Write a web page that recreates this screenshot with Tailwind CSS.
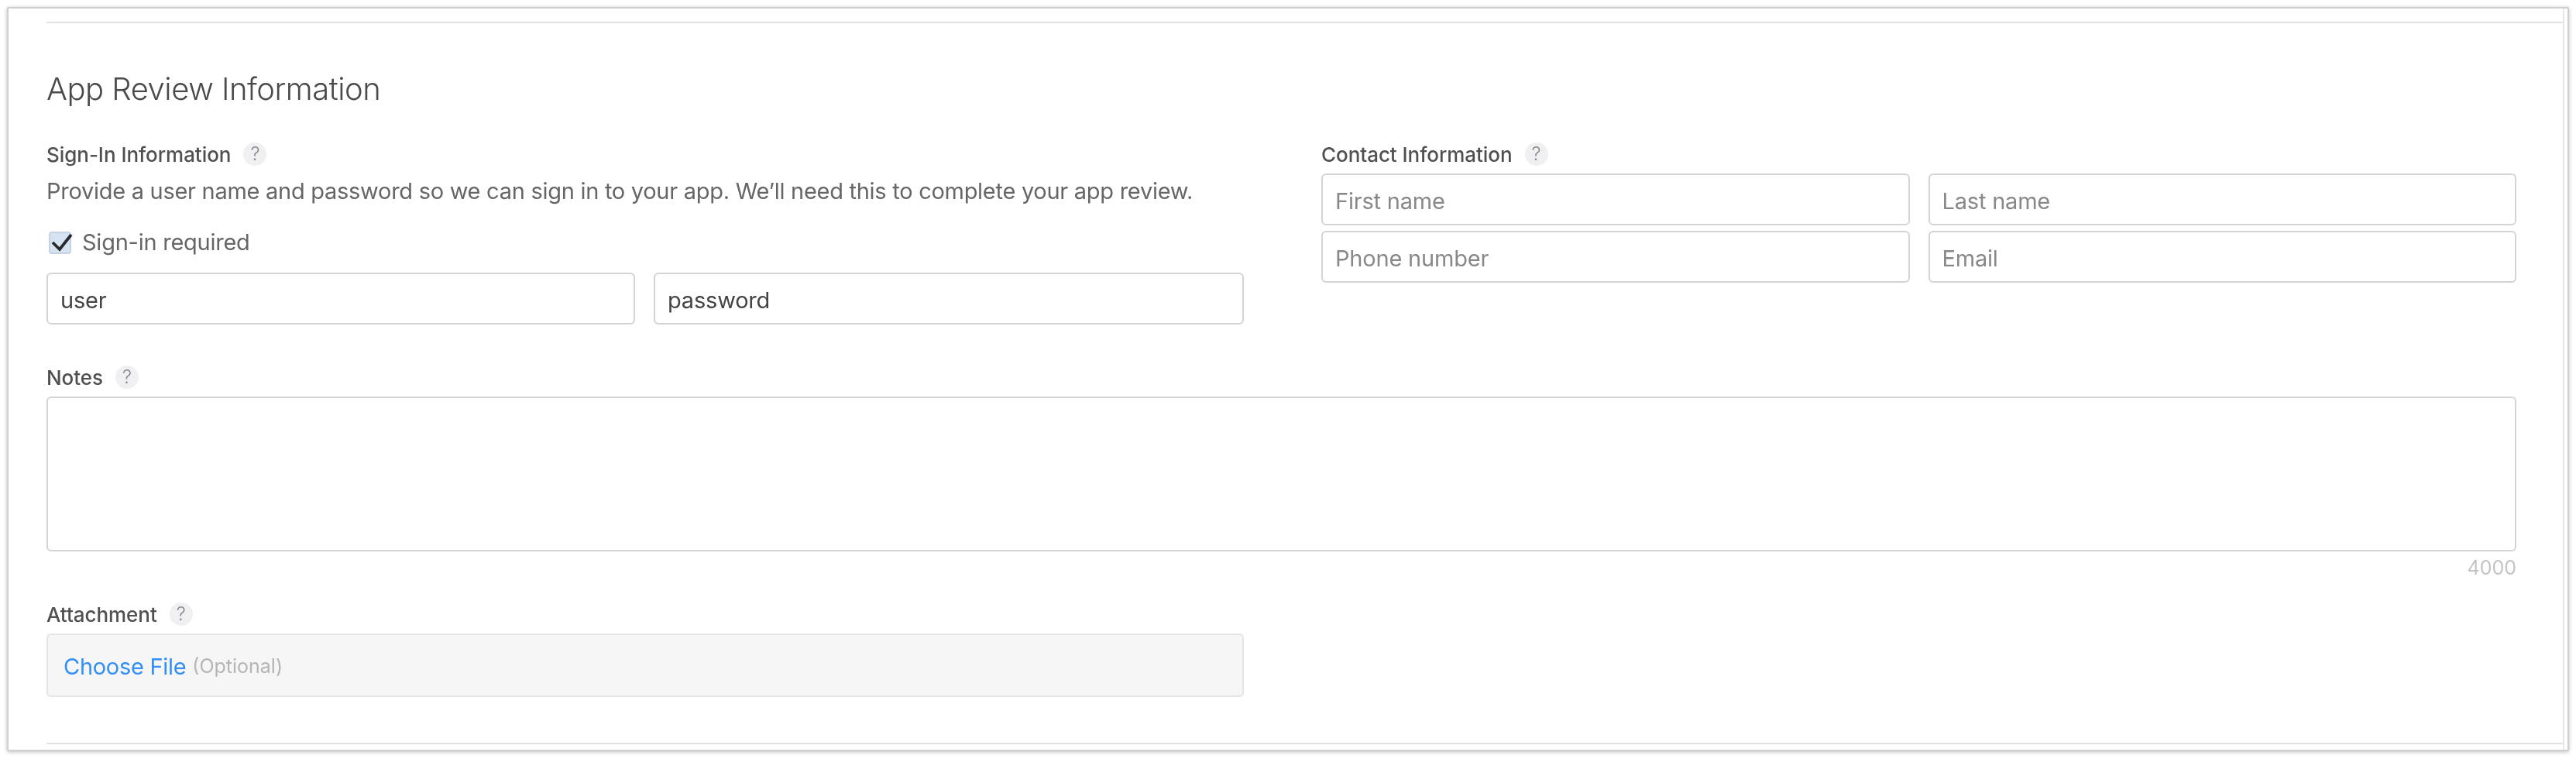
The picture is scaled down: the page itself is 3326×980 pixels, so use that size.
<!doctype html>
<html lang="en">
<head>
<meta charset="utf-8">
<title>App Review Information</title>
<script src="https://cdn.jsdelivr.net/npm/@tailwindcss/browser@4"></script>
</head>
<body class="bg-white font-['Inter','Liberation_Sans',sans-serif] text-[#555]">
<div class="w-[3326px] h-[980px] overflow-hidden bg-white pt-[9px] pl-[9px]">
  <div class="w-[3308px] h-[961px] bg-white border-2 border-[#cfcfcf] rounded-[2px] shadow-[0_1px_5px_rgba(0,0,0,0.25)] flex flex-col blur-[0.5px]">
    <div class="mr-[4px] h-full border-r-2 border-[#e6e6e6] pl-[49px] flex flex-col">
      <div class="mt-[17px] h-[2px] bg-[#e2e2e2]"></div>
      <div class="pr-[60px] flex flex-col flex-1">
        <h2 class="mt-[61px] h-[48px] leading-[48px] text-[40px] font-light text-[#4a4a4a] tracking-[-0.5px]">App Review Information</h2>
        <div class="mt-[45px] grid grid-cols-[1546px_1fr] gap-x-[100px] h-[235px]">
          <section class="flex flex-col">
            <div class="flex items-center h-[30px] gap-[16px]">
              <span class="text-[26px] font-medium text-[#505050] tracking-[-0.05px]">Sign-In Information</span>
              <span class="w-[30px] h-[30px] rounded-full bg-[#f0f0f3] text-[#888] text-[24px] font-light leading-[30px] text-center">?</span>
            </div>
            <p class="mt-[13px] h-[40px] leading-[40px] text-[29px] text-[#666] tracking-[-0.28px]">Provide a user name and password so we can sign in to your app. We’ll need this to complete your app review.</p>
            <label class="mt-[26px] h-[40px] flex items-center gap-[14px] text-[29px] text-[#666] tracking-[-0.25px]">
              <span class="ml-[3px] w-[29px] h-[29px] rounded-[4px] bg-[#d6e3f3] border-2 border-[#c4d2e2] flex items-center justify-center">
                <svg viewBox="0 0 29 29" class="w-[29px] h-[29px] shrink-0 overflow-visible"><path d="M5 14 L14 23 L29 4" fill="none" stroke="#2a2a2e" stroke-width="3.8"/></svg>
              </span>
              Sign-in required
            </label>
            <div class="mt-[19px] flex gap-[24px]">
              <input value="user" class="w-[760px] h-[67px] px-[16px] pt-[3px] bg-white border-2 border-[#d4d4d4] rounded-[6px] text-[29px] text-[#444] tracking-[-0.2px]">
              <input value="password" class="w-[762px] h-[67px] px-[16px] pt-[3px] bg-white border-2 border-[#d4d4d4] rounded-[6px] text-[29px] text-[#444] tracking-[-0.2px]">
            </div>
          </section>
          <section class="flex flex-col">
            <div class="flex items-center h-[30px] gap-[16px]">
              <span class="text-[26px] font-medium text-[#505050] tracking-[-0.05px]">Contact Information</span>
              <span class="w-[30px] h-[30px] rounded-full bg-[#f0f0f3] text-[#888] text-[24px] font-light leading-[30px] text-center">?</span>
            </div>
            <div class="mt-[10px] grid grid-cols-2 gap-x-[24px] gap-y-[7px]">
              <input placeholder="First name" class="h-[67px] px-[16px] pt-[3px] border-2 border-[#d4d4d4] rounded-[6px] text-[29px] tracking-[-0.2px] placeholder:text-[#888]">
              <input placeholder="Last name" class="h-[67px] px-[16px] pt-[3px] border-2 border-[#d4d4d4] rounded-[6px] text-[29px] tracking-[-0.2px] placeholder:text-[#888]">
              <input placeholder="Phone number" class="h-[67px] px-[16px] pt-[3px] border-2 border-[#d4d4d4] rounded-[6px] text-[29px] tracking-[-0.2px] placeholder:text-[#888]">
              <input placeholder="Email" class="h-[67px] px-[16px] pt-[3px] border-2 border-[#d4d4d4] rounded-[6px] text-[29px] tracking-[-0.2px] placeholder:text-[#888]">
            </div>
          </section>
        </div>
        <div class="mt-[53px] flex items-center h-[30px] gap-[16px]">
          <span class="text-[26px] font-medium text-[#505050] tracking-[-0.05px]">Notes</span>
          <span class="w-[30px] h-[30px] rounded-full bg-[#f0f0f3] text-[#888] text-[24px] font-light leading-[30px] text-center">?</span>
        </div>
        <textarea class="mt-[10px] h-[200px] w-full block resize-none border-2 border-[#d4d4d4] rounded-[6px]"></textarea>
        <div class="mt-[6px] h-[30px] leading-[30px] text-right text-[25px] text-[#c4c4c4]">4000</div>
        <div class="mt-[30px] flex items-center h-[30px] gap-[16px]">
          <span class="text-[26px] font-medium text-[#505050] tracking-[-0.05px]">Attachment</span>
          <span class="w-[30px] h-[30px] rounded-full bg-[#f0f0f3] text-[#888] text-[24px] font-light leading-[30px] text-center">?</span>
        </div>
        <div class="mt-[10px] w-[1546px] h-[82px] pt-[3px] bg-[#f6f6f6] border-2 border-[#e4e4e4] rounded-[6px] flex items-center px-[20px] gap-[8px]">
          <a class="text-[29px] text-[#338ff5] tracking-[-0.3px]">Choose File</a>
          <span class="text-[25px] text-[#b5b5b5] tracking-[0px]">(Optional)</span>
        </div>
      </div>
      <div class="h-[2px] bg-[#e2e2e2] mb-[7px]"></div>
    </div>
  </div>
</div>
</body>
</html>
